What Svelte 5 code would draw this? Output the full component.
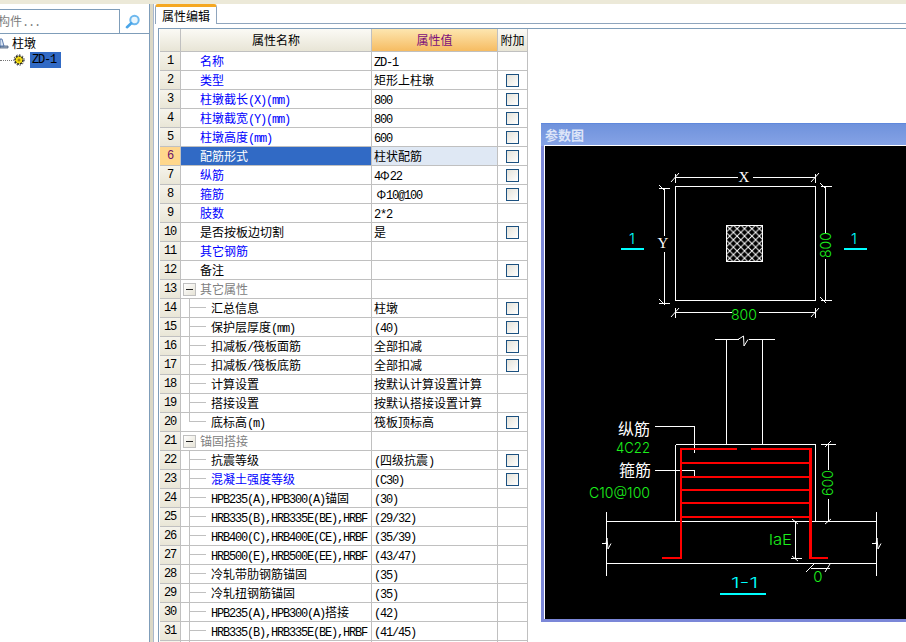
<script>
	// name kinds: blue = public attribute, plain = private, group = collapsible header
	const rows = [
		{ name: '名称', kind: 'blue', val: 'ZD-1' },
		{ name: '类型', kind: 'blue', val: '矩形上柱墩', cb: true },
		{ name: '柱墩截长(X)(mm)', kind: 'blue', val: '800', cb: true },
		{ name: '柱墩截宽(Y)(mm)', kind: 'blue', val: '800', cb: true },
		{ name: '柱墩高度(mm)', kind: 'blue', val: '600', cb: true },
		{ name: '配筋形式', kind: 'blue', val: '柱状配筋', cb: true, selected: true },
		{ name: '纵筋', kind: 'blue', val: '4Φ22', cb: true },
		{ name: '箍筋', kind: 'blue', val: '\u2009Φ10@100', cb: true },
		{ name: '肢数', kind: 'blue', val: '2*2' },
		{ name: '是否按板边切割', val: '是', cb: true },
		{ name: '其它钢筋', kind: 'blue', val: '' },
		{ name: '备注', val: '', cb: true },
		{ name: '其它属性', kind: 'group', val: '' },
		{ name: '汇总信息', child: true, val: '柱墩', cb: true },
		{ name: '保护层厚度(mm)', child: true, val: '(40)', cb: true },
		{ name: '扣减板/筏板面筋', child: true, val: '全部扣减', cb: true },
		{ name: '扣减板/筏板底筋', child: true, val: '全部扣减', cb: true },
		{ name: '计算设置', child: true, val: '按默认计算设置计算' },
		{ name: '搭接设置', child: true, val: '按默认搭接设置计算' },
		{ name: '底标高(m)', child: true, last: true, val: '筏板顶标高', cb: true },
		{ name: '锚固搭接', kind: 'group', val: '' },
		{ name: '抗震等级', child: true, val: '(四级抗震)', cb: true },
		{ name: '混凝土强度等级', child: true, kind: 'blue', val: '(C30)', cb: true },
		{ name: 'HPB235(A),HPB300(A)锚固', child: true, val: '(30)' },
		{ name: 'HRB335(B),HRB335E(BE),HRBF', child: true, val: '(29/32)' },
		{ name: 'HRB400(C),HRB400E(CE),HRBF', child: true, val: '(35/39)' },
		{ name: 'HRB500(E),HRB500E(EE),HRBF', child: true, val: '(43/47)' },
		{ name: '冷轧带肋钢筋锚固', child: true, val: '(35)' },
		{ name: '冷轧扭钢筋锚固', child: true, val: '(35)' },
		{ name: 'HPB235(A),HPB300(A)搭接', child: true, val: '(42)' },
		{ name: 'HRB335(B),HRB335E(BE),HRBF', child: true, val: '(41/45)' },
		{ name: '', child: true, val: '' }
	];

	// SimSun pairs 12px ideographs with half width latin, so split the runs
	function runs(text) {
		return (text.match(/[\x20-\x7e]+|[^\x20-\x7e]+/g) || []).map((t) => ({
			t,
			lat: /^[\x20-\x7e]/.test(t)
		}));
	}

	// drawing coordinates are page coordinates, see the svg viewBox
	const white = [
		[675, 176, 737, 176], [752, 176, 815, 176], [675, 172, 675, 181], [815, 172, 815, 181],
		[664, 187, 664, 234], [664, 250, 664, 302], [658, 187, 669, 187], [658, 302, 669, 302],
		[825, 185, 825, 232], [825, 257, 825, 299], [820, 185, 831, 185], [820, 299, 831, 299],
		[675, 311, 731, 311], [758, 311, 815, 311], [675, 306, 675, 316], [815, 306, 815, 316],
		[714, 338, 738, 338], [748, 338, 774, 338], [726, 338, 726, 443], [762, 338, 762, 443],
		[675, 443, 815, 443], [675, 443, 675, 520], [815, 443, 815, 520],
		[606, 520, 876, 520], [606, 562, 876, 562], [606, 510, 606, 574], [876, 510, 876, 574],
		[654, 425, 694, 425], [694, 425, 694, 451], [654, 469, 694, 469], [694, 469, 694, 475],
		[828, 443, 828, 468], [828, 497, 828, 520], [820, 443, 835, 443],
		[795, 520, 795, 557], [790, 557, 801, 557], [810, 567, 829, 567]
	];
	const ticks = [
		[671, 181, 679, 172], [811, 181, 819, 172], [659, 184, 665, 190], [659, 298, 665, 304],
		[820, 182, 826, 188], [820, 296, 826, 302], [671, 316, 679, 307], [811, 316, 819, 307],
		[825, 446, 831, 440], [825, 523, 831, 518], [792, 518, 798, 523], [792, 555, 798, 560],
		[806, 571, 814, 563], [825, 571, 830, 563]
	];
	const stirrups = [461, 475, 488, 501, 515];
</script>

<div class="app">
	<aside class="left">
		<div class="search">
			<div class="input">构件<span class="lat">...</span></div>
			<svg class="find" width="16" height="15" viewBox="0 0 16 15">
				<circle cx="9.5" cy="6" r="4.2" fill="#eaf6fd" stroke="#6db8ee" stroke-width="2" />
				<path d="M6.2 9.2 2 13.2" stroke="#4aa5e8" stroke-width="2.6" stroke-linecap="round" />
			</svg>
		</div>
		<div class="tree">
			<div class="node">
				<svg width="9" height="13" viewBox="0 0 9 13">
					<path d="M0 9h8v2H0z" fill="#9fb3c8" stroke="#4a5a78" stroke-width=".8" />
					<path d="M0 2h2l2 7H0z" fill="#d7e3f2" stroke="#3b5f9c" stroke-width=".8" />
				</svg>
				<span class="label">柱墩</span>
			</div>
			<div class="node sub">
				<span class="dots"></span>
				<svg width="12" height="12" viewBox="0 0 12 12">
					<circle cx="6" cy="6" r="4" fill="#f6e012" stroke="#222" stroke-width="1.4" stroke-dasharray="2 1" />
					<circle cx="6" cy="6" r="1.5" fill="#a8860a" />
					<circle cx="6" cy="6" r="5.2" fill="none" stroke="#333" stroke-width="1" stroke-dasharray="1.4 1.6" />
				</svg>
				<span class="picked">ZD-1</span>
			</div>
		</div>
	</aside>

	<div class="splitter"></div>

	<main class="right">
		<div class="tabs"><div class="tab">属性编辑</div></div>
		<div class="pane">
			<div class="grid">
				<div class="cell head num"></div>
				<div class="cell head">属性名称</div>
				<div class="cell head hot">属性值</div>
				<div class="cell head">附加</div>

				{#each rows as row, i}
					<div class="cell num" class:cur={row.selected}>{i < 31 ? i + 1 : ''}</div>
					<div
						class="cell name"
						class:blue={row.kind === 'blue'}
						class:group={row.kind === 'group'}
						class:child={row.child}
						class:sel={row.selected}
					>
						{#if row.child}
							<span class="v" class:end={row.last}></span>
							<span class="h"></span>
						{/if}
						{#if row.kind === 'group'}
							<span class="minus"></span>
						{/if}
						<span class="txt">
							{#each runs(row.name) as r}<span class:lat={r.lat}>{r.t}</span>{/each}
						</span>
					</div>
					<div class="cell val" class:selval={row.selected}>
						{#each runs(row.val) as r}<span class:lat={r.lat}>{r.t}</span>{/each}
					</div>
					<div class="cell extra">
						{#if row.cb}<span class="check"></span>{/if}
					</div>
				{/each}
			</div>
		</div>
	</main>

	<section class="window">
		<div class="title">参数图</div>
		<svg class="drawing" width="361" height="473" viewBox="545 145 361 473">
			<defs>
				<pattern id="hatch" width="7.4" height="7.4" patternUnits="userSpaceOnUse" x="726" y="224">
					<path d="M0 0 7.4 7.4M7.4 0 0 7.4" stroke="#fff" stroke-width="1" />
				</pattern>
			</defs>
			<g stroke="#fff" stroke-width="1" shape-rendering="crispEdges">
				{#each white as [x1, y1, x2, y2]}
					<line x1={x1 + 0.5} y1={y1 + 0.5} x2={x2 + 0.5} y2={y2 + 0.5} />
				{/each}
				<rect x="675.5" y="185.5" width="140" height="114" fill="none" />
			</g>
			<g stroke="#fff" stroke-width="1">
				{#each ticks as [x1, y1, x2, y2]}
					<line {x1} {y1} {x2} {y2} />
				{/each}
				<path d="M738 338.5 743.5 335 744 345 748 338.5" fill="none" />
				<path d="M602 542.5H606L607 537 608 548 611 542.5M872 542.5H876L877 537 878 548 881 542.5" fill="none" />
			</g>
			<rect x="726" y="224" width="37" height="36" fill="url(#hatch)" />
			<rect x="726.5" y="224.5" width="36" height="36" fill="none" stroke="#fff" />

			<g fill="#f00" shape-rendering="crispEdges">
				<rect x="680" y="447" width="2" height="111" />
				<rect x="809" y="447" width="3" height="111" />
				<rect x="662" y="556" width="20" height="2" />
				<rect x="810" y="556" width="18" height="2" />
				<rect x="680" y="447" width="57" height="2" />
				<rect x="751" y="447" width="60" height="2" />
				{#each stirrups as y}
					<rect x="681" {y} width="129" height="2" />
				{/each}
			</g>

			<g class="serif">
				<text x="744" y="181" text-anchor="middle">X</text>
				<text x="663" y="247" text-anchor="middle">Y</text>
			</g>
			<g class="cad green">
				<text x="731" y="319" textLength="26" lengthAdjust="spacingAndGlyphs">800</text>
				<text transform="translate(831 257) rotate(-90)" textLength="26" lengthAdjust="spacingAndGlyphs">800</text>
				<text transform="translate(833 495) rotate(-90)" textLength="26" lengthAdjust="spacingAndGlyphs">600</text>
				<text x="616" y="452" textLength="34" lengthAdjust="spacingAndGlyphs">4C22</text>
				<text x="589" y="497" textLength="61" lengthAdjust="spacingAndGlyphs">C10@100</text>
				<text x="769" y="544" textLength="23" lengthAdjust="spacingAndGlyphs">laE</text>
				<text x="818" y="581" text-anchor="middle">0</text>
			</g>
			<g class="cad cyan">
				<text x="632" y="243" text-anchor="middle">1</text>
				<text x="854" y="243" text-anchor="middle">1</text>
				<text x="731" y="587" textLength="27" lengthAdjust="spacingAndGlyphs">1-1</text>
			</g>
			<g fill="#0ff" shape-rendering="crispEdges">
				<rect x="621" y="247" width="23" height="2" />
				<rect x="844" y="247" width="23" height="2" />
				<rect x="720" y="592" width="46" height="2" />
			</g>
			<g class="note">
				<text x="618" y="434">纵筋</text>
				<text x="619" y="475">箍筋</text>
			</g>
		</svg>
	</section>
</div>

<style>
	:global(body) {
		background: #fff;
	}

	.app {
		position: relative;
		display: flex;
		width: 906px;
		height: 642px;
		overflow: hidden;
		border-top: 4px solid #ece9d8;
		box-sizing: border-box;
		font: 12px/18px "Noto Sans CJK SC", sans-serif;
		color: #000;
	}

	.lat {
		font-family: "Liberation Mono", monospace;
		font-size: 12px;
		letter-spacing: -1.2px;
		white-space: pre;
	}

	.left {
		width: 149px;
		display: flex;
		flex-direction: column;
		border-right: 1px solid #7f9db9;
		flex: none;
	}

	.search {
		display: flex;
		align-items: flex-start;
		padding-top: 5px;
		height: 24px;
	}

	.input {
		width: 128px;
		height: 24px;
		margin-left: -8px;
		box-sizing: border-box;
		padding: 2px 0 0 5px;
		border: 1px solid #7f9db9;
		border-bottom: 0;
		color: #7d7d7d;
		flex: none;
	}

	.find {
		margin: 5px 0 0 5px;
	}

	.tree {
		flex: 1;
		border-top: 1px solid #7f9db9;
		padding-top: 1px;
	}

	.node {
		display: flex;
		align-items: center;
		height: 16px;
	}

	.label {
		margin-left: 3px;
	}

	.sub {
		margin-top: 1px;
	}

	.dots {
		width: 12px;
		border-top: 1px dotted #777;
		margin-right: 1px;
	}

	.picked {
		margin-left: 5px;
		width: 31px;
		height: 16px;
		line-height: 16px;
		padding-left: 2px;
		box-sizing: border-box;
		background: #316ac5;
		font-family: "Liberation Mono", monospace;
		font-size: 12px;
		letter-spacing: -1.2px;
	}

	.splitter {
		width: 4px;
		flex: none;
		background: #dbd8c6;
		border-right: 1px solid #a9b8cd;
		box-sizing: border-box;
		margin-left: 0;
	}

	.right {
		flex: 1;
		display: flex;
		flex-direction: column;
		min-width: 0;
		padding-left: 1px;
	}

	.tabs {
		height: 19px;
		flex: none;
		display: flex;
		border-bottom: 1px solid #8fa5bd;
		box-sizing: content-box;
	}

	.tab {
		width: 62px;
		height: 20px;
		box-sizing: border-box;
		border: 1px solid #8fa5bd;
		border-top: 3px solid #f5a823;
		border-bottom: 0;
		border-radius: 3px 3px 0 0;
		background: #fff;
		padding-left: 6px;
		line-height: 17px;
		position: relative;
		z-index: 1;
		margin-bottom: -1px;
	}

	.pane {
		flex: 1;
		margin: 4px 0 0 3px;
		border-left: 1px solid #7f9db9;
		border-top: 1px solid #7f9db9;
		padding: 0 0 0 1px;
		min-height: 0;
	}

	.grid {
		display: grid;
		grid-template-columns: 21px 191px 126px 30px;
		grid-auto-rows: 19px;
		grid-template-rows: 23px;
		width: 368px;
	}

	.cell {
		box-sizing: border-box;
		border-right: 1px solid #c0c0c0;
		border-bottom: 1px solid #c0c0c0;
		height: 19px;
		line-height: 18px;
		white-space: nowrap;
		overflow: hidden;
	}

	.head {
		height: 23px;
		line-height: 21px;
		text-align: center;
		background: linear-gradient(#fbfaf5, #e8e5d6);
	}

	.hot {
		background: linear-gradient(#fde6b0, #f6bc62);
		color: #7b0f7b;
	}

	.num {
		text-align: center;
		background: linear-gradient(#f6f4ec, #e9e6d7);
		font: 12px/18px "Liberation Mono", monospace;
		letter-spacing: -1.2px;
	}

	.head.num {
		height: 23px;
		background: linear-gradient(#fbfaf5, #e8e5d6);
	}

	.cur {
		background: #ffd78c;
		color: #6a0f6a;
	}

	.name {
		position: relative;
		padding-left: 19px;
	}

	.child {
		padding-left: 30px;
	}

	.blue {
		color: #0000ff;
	}

	.group {
		color: #808080;
	}

	.sel {
		background: #316ac5;
		color: #fff;
	}

	/* tree guides that sit over the name column */
	.v {
		position: absolute;
		left: 8px;
		top: -1px;
		bottom: -1px;
		width: 1px;
		background: #c0c0c0;
	}

	.v.end {
		bottom: 9px;
	}

	.h {
		position: absolute;
		left: 9px;
		top: 8px;
		width: 16px;
		height: 1px;
		background: #c0c0c0;
	}

	.minus {
		position: absolute;
		left: 2px;
		top: 3px;
		width: 13px;
		height: 13px;
		box-sizing: border-box;
		border: 1px solid #c0c0c0;
		background: linear-gradient(135deg, #fff, #e6e3d6);
	}

	.minus::after {
		content: "";
		position: absolute;
		left: 2px;
		top: 5px;
		width: 7px;
		height: 1px;
		background: #222;
	}

	.val {
		padding-left: 2px;
	}

	.selval {
		background: #dfe8f4;
	}

	.extra {
		display: flex;
		align-items: center;
		justify-content: center;
	}

	.check {
		width: 13px;
		height: 13px;
		box-sizing: border-box;
		border: 1px solid #1c5180;
		background: linear-gradient(135deg, #e4e2d9, #fff);
	}

	.window {
		position: absolute;
		left: 541px;
		top: 119px;
		width: 365px;
		height: 499px;
		box-sizing: border-box;
		padding-left: 3px;
		background: linear-gradient(#6f92dc, #86a3e6 22px, #7b87d8 22px);
		border-top: 1px solid #5f88dc;
	}

	.title {
		height: 21px;
		line-height: 22px;
		padding-left: 1px;
		color: #dde5f8;
		font-weight: 700;
		font-size: 13px;
	}

	.drawing {
		display: block;
		background: #000;
		border-top: 1px solid #fff;
		border-left: 1px solid #fff;
		box-sizing: content-box;
	}

	.cad {
		font: 300 15px Inter, "Liberation Sans", sans-serif;
	}

	.serif {
		fill: #fff;
		font: 15px "Liberation Serif", serif;
	}

	.green {
		fill: #1cf01c;
	}

	.cyan {
		fill: #0ff;
	}

	.note {
		fill: #fff;
		font: 16px "Noto Sans CJK SC", sans-serif;
	}
</style>
